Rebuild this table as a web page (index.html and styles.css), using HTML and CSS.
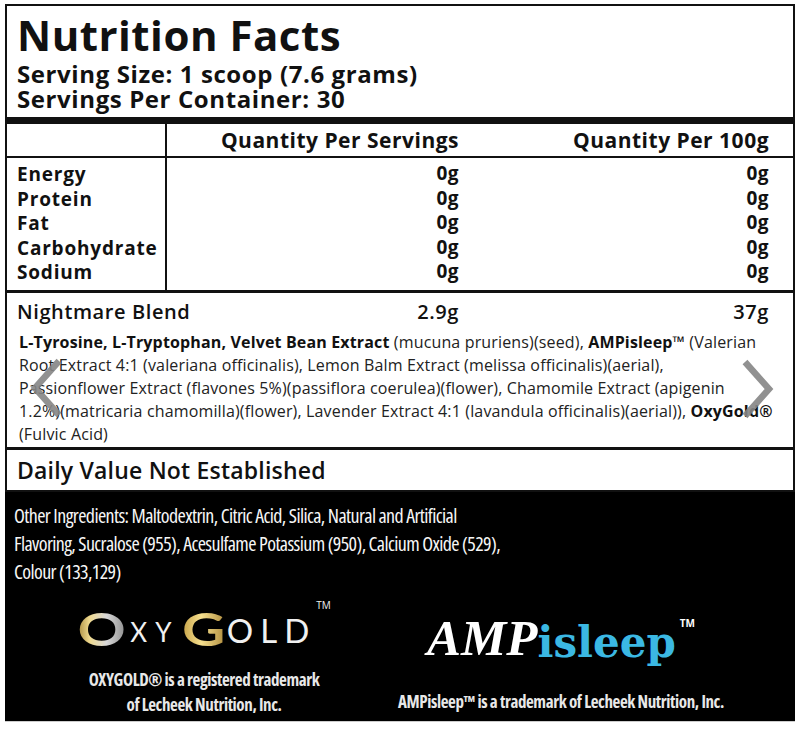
FILE: index.html
```html
<!DOCTYPE html>
<html lang="en">
<head>
<meta charset="utf-8">
<title>Nutrition Facts</title>
<link rel="stylesheet" href="styles.css">
</head>
<body>
<div class="label">
  <header class="head">
    <h1 class="title">Nutrition Facts</h1>
    <p class="serving">Serving Size: 1 scoop (7.6 grams)</p>
    <p class="serving">Servings Per Container: 30</p>
  </header>
  <div class="bar"></div>
  <div class="grid thead">
    <div class="name-col"></div>
    <div class="num">Quantity Per Servings</div>
    <div class="num">Quantity Per 100g</div>
  </div>
  <div class="grid nutrients">
    <div class="name-col names">
      <div>Energy</div><div>Protein</div><div>Fat</div><div>Carbohydrate</div><div>Sodium</div>
    </div>
    <div class="num vals">
      <div>0g</div><div>0g</div><div>0g</div><div>0g</div><div>0g</div>
    </div>
    <div class="num vals">
      <div>0g</div><div>0g</div><div>0g</div><div>0g</div><div>0g</div>
    </div>
  </div>
  <section class="blend">
    <div class="grid blend-row">
      <div class="blend-name">Nightmare Blend</div>
      <div class="num">2.9g</div>
      <div class="num">37g</div>
    </div>
    <p class="ingredients"><b>L-Tyrosine, L-Tryptophan, Velvet Bean Extract</b> (mucuna pruriens)(seed), <b>AMPisleep™</b> (Valerian<br>Root Extract 4:1 (valeriana officinalis), Lemon Balm Extract (melissa officinalis)(aerial),<br>Passionflower Extract (flavones 5%)(passiflora coerulea)(flower), Chamomile Extract (apigenin<br>1.2%)(matricaria chamomilla)(flower), Lavender Extract 4:1 (lavandula officinalis)(aerial)), <b>OxyGold®</b><br>(Fulvic Acid)</p>
  </section>
  <div class="daily">Daily Value Not Established</div>
  <footer class="dark">
    <p class="other">Other Ingredients: Maltodextrin, Citric Acid, Silica, Natural and Artificial<br>Flavoring, Sucralose (955), Acesulfame Potassium (950), Calcium Oxide (529),<br>Colour (133,129)</p>
    <div class="logos">
      <div class="logo oxy">
        <div class="oxy-mark"><span class="ring o">O</span><span class="xy">XY</span><span class="ring g">G</span><span class="old">OLD</span><sup class="tm">TM</sup></div>
        <p class="cap">OXYGOLD® is a registered trademark<br>of Lecheek Nutrition, Inc.</p>
      </div>
      <div class="logo amp">
        <div class="amp-mark"><span class="amp-a">AMP</span><span class="amp-i">isleep</span><sup class="tm">TM</sup></div>
        <p class="cap">AMPisleep™ is a trademark of Lecheek Nutrition, Inc.</p>
      </div>
    </div>
  </footer>
  <svg class="arrow left" viewBox="0 0 34 60" width="34" height="60"><path d="M30 3 L6 30 L30 57" fill="none" stroke="#858585" stroke-width="6.5" stroke-opacity="0.9"/></svg>
  <svg class="arrow right" viewBox="0 0 34 60" width="34" height="60"><path d="M4 3 L28 30 L4 57" fill="none" stroke="#858585" stroke-width="6.5" stroke-opacity="0.9"/></svg>
</div>
</body>
</html>
```
FILE: styles.css
```css
* { box-sizing: border-box; }
body {
  margin: 0;
  background: #fff;
  font-family: "Open Sans", "Noto Sans", sans-serif;
  color: #111;
}
.label {
  position: relative;
  margin: 4px 5px 0;
  width: 790px;
  border: 2px solid #111;
  border-bottom: none;
}
.head {
  height: 111px;
  padding: 3px 0 0 10px;
}
.title {
  margin: 0;
  font-size: 42px;
  font-weight: 700;
  line-height: 52px;
  letter-spacing: 0.5px;
}
.serving {
  margin: 0;
  font-size: 24px;
  font-weight: 700;
  line-height: 25px;
  letter-spacing: 0.6px;
}
.bar { height: 7px; background: #111; }
.grid {
  display: grid;
  grid-template-columns: 160px 292px 1fr;
  padding-right: 24px;
}
.name-col { border-right: 2px solid #111; }
.num { text-align: right; white-space: nowrap; }
.thead {
  height: 34px;
  border-bottom: 2px solid #111;
  font-size: 21px;
  font-weight: 700;
  line-height: 33px;
  letter-spacing: 0.5px;
}
.nutrients {
  height: 135px;
  border-bottom: 3px solid #111;
  font-size: 19px;
  font-weight: 700;
  line-height: 24.5px;
}
.names { padding: 4px 0 0 10px; letter-spacing: 0.8px; }
.vals { padding-top: 3px; letter-spacing: 0.5px; }
.blend {
  height: 157px;
  border-bottom: 3px solid #111;
  padding-top: 6px;
}
.blend-row {
  font-size: 20px;
  font-weight: 600;
  line-height: 26px;
  letter-spacing: 0.6px;
}
.blend-name { padding-left: 10px; white-space: nowrap; }
.ingredients {
  margin: 6px 0 0 12px;
  font-size: 16px;
  line-height: 23px;
  color: #222;
  white-space: nowrap;
  letter-spacing: 0.15px;
}
.ingredients b { font-weight: 700; color: #111; }
.daily {
  height: 42px;
  padding-left: 10px;
  font-size: 23px;
  font-weight: 600;
  line-height: 41px;
  letter-spacing: 0.2px;
  border-bottom: 2px solid #111;
}
.dark {
  background: #000;
  color: #fff;
  height: 230px;
  margin: 0 -2px;
  padding: 10px 0 0 9px;
  border-bottom: 1px solid #ccc;
}
.other {
  margin: 0;
  font-stretch: 75%;
  font-size: 20px;
  line-height: 28px;
  letter-spacing: -0.6px;
  white-space: nowrap;
  color: #f6f6f6;
}
.logos {
  display: flex;
  margin-top: 14px;
}
.logo { text-align: center; }
.oxy { width: 380px; }
.amp { width: 334px; }
.oxy-mark {
  height: 58px;
  display: flex;
  align-items: center;
  justify-content: center;
  padding-right: 4px;
  font-family: "Lato", sans-serif;
  color: #f0f0f0;
}
.ring {
  display: inline-block;
  font-size: 46px;
  font-weight: 700;
  line-height: 1;
  -webkit-background-clip: text;
  background-clip: text;
  color: transparent;
  transform: scaleX(1.3);
  margin: 0 10px;
}
.ring.o { background-image: linear-gradient(90deg, #a88a3e 0%, #efd98e 25%, #d9d9d9 60%, #8f8f8f 100%); }
.ring.g { background-image: linear-gradient(90deg, #c7a247 0%, #f6e08f 45%, #b08d3e 100%); margin-left: 8px; margin-right: 6px; }
.xy { font-size: 26px; letter-spacing: 8px; font-weight: 400; margin-top: 6px; }
.old { font-size: 33px; letter-spacing: 7px; font-weight: 400; margin-top: 2px; }
.tm { font-size: 10px; align-self: flex-start; margin-top: -2px; font-family: "Open Sans", sans-serif; }
.cap {
  margin: 9px 0 0;
  font-stretch: 75%;
  font-weight: 700;
  font-size: 17px;
  line-height: 25px;
  color: #e8e8e8;
  letter-spacing: -0.4px;
}
.amp-mark {
  height: 64px;
  display: flex;
  align-items: flex-end;
  justify-content: center;
  font-weight: 700;
  line-height: 1;
}
.amp-a { font-family: "Liberation Serif", serif; font-style: italic; color: #fff; font-size: 51px; }
.amp-i { font-family: "DejaVu Serif", serif; color: #3bb8e3; font-size: 42px; }
.amp .tm { margin-top: 18px; margin-left: 4px; }
.amp .cap { margin-top: 25px; }
.arrow { position: absolute; }
.arrow.left { left: 22px; top: 352px; }
.arrow.right { left: 734px; top: 353px; }
```
